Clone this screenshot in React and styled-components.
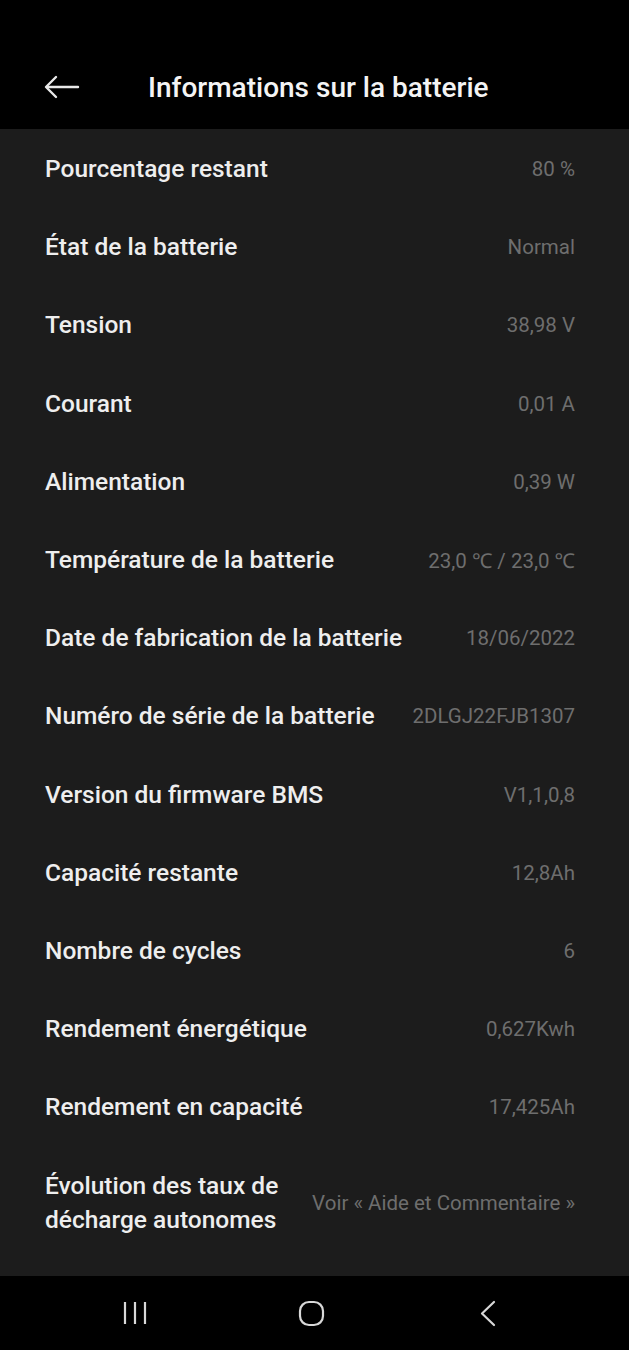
import React from 'react';
import styled, { createGlobalStyle } from 'styled-components';

const GlobalStyle = createGlobalStyle`
  html, body {
    margin: 0;
    padding: 0;
    background: #000;
  }
  body {
    font-family: Roboto, "Noto Sans", sans-serif;
    -webkit-font-smoothing: antialiased;
  }
`;

const Screen = styled.div`
  width: 629px;
  height: 1350px;
  display: flex;
  flex-direction: column;
  background: #000;
  overflow: hidden;
`;

const Header = styled.header`
  height: 129px;
  flex-shrink: 0;
  display: flex;
  align-items: center;
  padding: 45px 0 0 44px;
  box-sizing: border-box;
  background: #000;
`;

const BackBtn = styled.button`
  width: 36px;
  height: 30px;
  padding: 0;
  border: none;
  background: transparent;
  display: flex;
  align-items: center;
  cursor: pointer;
`;

const Title = styled.h1`
  margin: 0 0 0 68px;
  font-size: 28px;
  font-weight: 500;
  color: #f4f4f4;
  letter-spacing: 0;
`;

const List = styled.main`
  flex: 1;
  background: #1c1c1c;
  display: flex;
  flex-direction: column;
  padding-top: 1px;
`;

const Row = styled.div`
  height: ${({ tall }) => (tall ? '113px' : '78.2px')};
  flex-shrink: 0;
  display: flex;
  align-items: center;
  justify-content: space-between;
  padding: 0 54px 0 45px;
  gap: 24px;
`;

const Label = styled.span`
  font-size: 24.5px;
  font-weight: 500;
  color: #eeeeee;
  line-height: 34px;
`;

const Value = styled.span`
  font-size: 20.5px;
  font-weight: 400;
  color: #6e6e6e;
  text-align: right;
  white-space: nowrap;
`;

const NavBar = styled.nav`
  height: 74px;
  flex-shrink: 0;
  background: #000;
  display: flex;
  align-items: center;
  justify-content: space-between;
  padding: 0 121px 0 115px;
`;

const NavBtn = styled.div`
  width: 40px;
  height: 40px;
  display: flex;
  align-items: center;
  justify-content: center;
`;

const rows = [
  ['Pourcentage restant', '80 %'],
  ['État de la batterie', 'Normal'],
  ['Tension', '38,98 V'],
  ['Courant', '0,01 A'],
  ['Alimentation', '0,39 W'],
  ['Température de la batterie', '23,0 ℃ / 23,0 ℃'],
  ['Date de fabrication de la batterie', '18/06/2022'],
  ['Numéro de série de la batterie', '2DLGJ22FJB1307'],
  ['Version du firmware BMS', 'V1,1,0,8'],
  ['Capacité restante', '12,8Ah'],
  ['Nombre de cycles', '6'],
  ['Rendement énergétique', '0,627Kwh'],
  ['Rendement en capacité', '17,425Ah'],
];

export default function App() {
  return (
    <Screen>
      <GlobalStyle />
      <Header>
        <BackBtn>
          <svg width="36" height="26" viewBox="0 0 36 26" fill="none" stroke="#e8e8e8" strokeWidth="2.4" strokeLinecap="round" strokeLinejoin="round">
            <path d="M34 13H3" />
            <path d="M12 3L2 13l10 10" />
          </svg>
        </BackBtn>
        <Title>Informations sur la batterie</Title>
      </Header>
      <List>
        {rows.map(([label, value]) => (
          <Row key={label}>
            <Label>{label}</Label>
            <Value>{value}</Value>
          </Row>
        ))}
        <Row tall>
          <Label>Évolution des taux de<br />décharge autonomes</Label>
          <Value>Voir « Aide et Commentaire »</Value>
        </Row>
      </List>
      <NavBar>
        <NavBtn>
          <svg width="24" height="26" viewBox="0 0 24 26" stroke="#d8d8d8" strokeWidth="2.2">
            <path d="M2 2v22M12 2v22M22 2v22" />
          </svg>
        </NavBtn>
        <NavBtn>
          <svg width="27" height="27" viewBox="0 0 27 27" fill="none" stroke="#d8d8d8" strokeWidth="2.2">
            <rect x="2" y="2" width="23" height="23" rx="9" />
          </svg>
        </NavBtn>
        <NavBtn>
          <svg width="16" height="27" viewBox="0 0 16 27" fill="none" stroke="#d8d8d8" strokeWidth="2.2" strokeLinecap="round" strokeLinejoin="round">
            <path d="M14 2L2 13.5 14 25" />
          </svg>
        </NavBtn>
      </NavBar>
    </Screen>
  );
}
